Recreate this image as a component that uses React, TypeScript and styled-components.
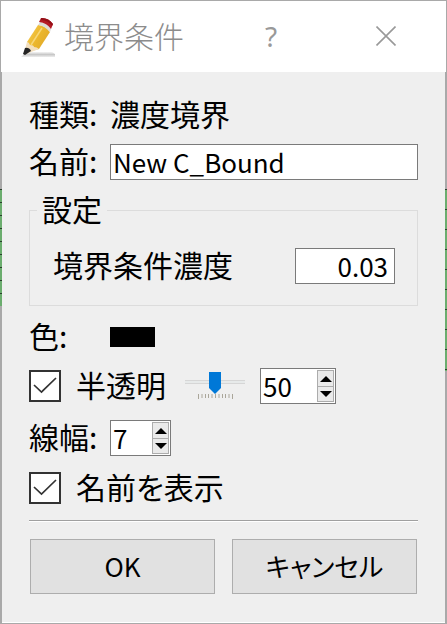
import React, { useState } from "react";
import styled, { createGlobalStyle } from "styled-components";

const GlobalStyle = createGlobalStyle`
  * { box-sizing: border-box; }
  body { margin: 0; background: #efefef; }
  body, input, button {
    font-family: "Noto Sans CJK JP", "Noto Sans", sans-serif;
    color: #000;
  }
`;

const Dialog = styled.main`
  border-top: 1px solid #a9a9a9;
  border-bottom: 1px solid #a9a9a9;
`;

const TitleBar = styled.header`
  display: flex;
  align-items: center;
  height: 71px;
  padding: 0 48px 0 20px;
  background: #fff;
  border: solid #a9a9a9;
  border-width: 0 1px;
`;

const Title = styled.h1`
  flex: 1;
  margin: 0 0 0 7px;
  padding-bottom: 4px;
  font-size: 30px;
  font-weight: 300;
  line-height: 36px;
  white-space: nowrap;
  color: #8c8c8c;
`;

const TitleButton = styled.button`
  display: flex;
  align-items: center;
  justify-content: center;
  width: 24px;
  height: 36px;
  padding: 0 0 2px;
  border: 0;
  background: none;
  font-family: "Noto Sans", sans-serif;
  font-size: 28px;
  line-height: 36px;
  color: #999;
  & + & { margin-left: 91px; }
`;

const Frame = styled.div`
  display: grid;
  grid-template-columns: 2px minmax(0, 1fr) 2px;
`;

const Edge = styled.div<{ $pitch: number; $length: number }>`
  background:
    repeating-linear-gradient(#29402b 0 1px, #6bad6e 1px ${(p) => p.$pitch}px)
      0 117px / 2px ${(p) => p.$length}px no-repeat,
    #a9a9a9;
`;

const Form = styled.form`
  padding: 25px 27px 28px;
  background: #efefef;
  border-bottom: 1px solid #fff;
`;

const Row = styled.div<{ $gap?: number }>`
  display: flex;
  align-items: center;
  height: 36px;
  margin-top: ${(p) => p.$gap ?? 0}px;
  font-size: 30px;
  line-height: 36px;
  white-space: nowrap;
`;

const Label = styled.label`
  flex: none;
  width: 81px;
  padding-bottom: 4px;
`;

const Caption = styled.span`
  flex: none;
  width: 81px;
  padding-bottom: 4px;
`;

const Value = styled.span`
  padding-bottom: 4px;
`;

const TextBox = styled.input<{ $numeric?: boolean }>`
  flex: ${(p) => (p.$numeric ? "0 0 100px" : "1")};
  min-width: 0;
  height: 36px;
  padding: 0 ${(p) => (p.$numeric ? 6 : 2)}px 2px;
  border: 1px solid #7a7a7a;
  border-radius: 0;
  outline: 0;
  background: #fff;
  font-size: 26px;
  text-align: ${(p) => (p.$numeric ? "right" : "left")};
`;

const Group = styled.fieldset`
  margin: 16px 0 0;
  padding: 24px 22px 21px 23px;
  border: 1px solid #dcdcdc;
`;

const Legend = styled.legend`
  margin-left: -16px;
  padding: 0 5px 4px;
  font-size: 30px;
  line-height: 24px;
`;

const GroupLabel = styled.label`
  flex: 1;
  padding-bottom: 4px;
`;

const Swatch = styled.button`
  width: 45px;
  height: 20px;
  padding: 0;
  border: 0;
  background: #000;
`;

const CheckLabel = styled.label`
  display: flex;
  align-items: center;
  gap: 15px;
`;

const CheckText = styled.span`
  padding-bottom: 4px;
  font-feature-settings: "palt";
`;

const CheckBox = styled.input`
  appearance: none;
  width: 32px;
  height: 32px;
  margin: 0;
  border: 2px solid #333;
  background: #fff;
`;

const CheckHolder = styled.span`
  display: grid;
  & > * { grid-area: 1 / 1; }
  svg { pointer-events: none; }
  input:not(:checked) + svg { visibility: hidden; }
`;

const SliderBox = styled.div`
  display: flex;
  flex-direction: column;
  width: 60px;
  height: 28px;
  margin: 0 15px 0 auto;
`;

const Slider = styled.input`
  appearance: none;
  width: 100%;
  height: 22px;
  margin: 0;
  background: linear-gradient(#d6d6d6 0 1px, #e7eaea 1px 3px, #d6d6d6 3px) 0 8px / 100% 4px no-repeat;
  &::-webkit-slider-thumb {
    appearance: none;
    width: 12px;
    height: 22px;
    background: #0078d7;
    clip-path: polygon(0 0, 100% 0, 100% 73%, 50% 100%, 0 73%);
  }
`;

const Ticks = styled.svg`
  display: block;
  align-self: center;
`;

const CheckWithSlider = styled.div`
  display: flex;
  align-items: center;
  width: 231px;
`;

const SpinBox = styled.div<{ $wide?: boolean }>`
  display: flex;
  width: ${(p) => (p.$wide ? 76 : 61)}px;
  height: 36px;
  padding: 1px;
  border: 1px solid #7a7a7a;
  background: #fff;
`;

const SpinInput = styled.input`
  appearance: textfield;
  flex: 1;
  min-width: 0;
  padding: 0 0 2px 1px;
  border: 0;
  outline: 0;
  background: transparent;
  font-size: 26px;
  &::-webkit-inner-spin-button { appearance: none; }
`;

const SpinButtons = styled.div`
  display: grid;
  grid-template-rows: 1fr 1fr;
  width: 17px;
  border: 1px solid #acacac;
`;

const SpinButton = styled.button`
  display: flex;
  align-items: center;
  justify-content: center;
  padding: 0;
  border: 0;
  background: #eaeaea;
  & + & { border-top: 1px solid #acacac; }
`;

const Divider = styled.hr`
  height: 2px;
  margin: 14px 0 17px;
  border: 0;
  border-top: 1px solid #a0a0a0;
  background: #fff;
`;

const Actions = styled.div`
  display: grid;
  grid-template-columns: 1fr 1fr;
  gap: 17px;
  padding: 0 1px;
`;

const ActionButton = styled.button`
  height: 55px;
  padding: 0 0 2px;
  border: 1px solid #adadad;
  background: #e1e1e1;
  font-size: 26px;
  font-feature-settings: "palt";
`;

function PencilIcon() {
  return (
    <svg width="36" height="42" viewBox="0 0 36 42" aria-hidden="true">
      <defs>
        <linearGradient id="shadow" x1="0" y1="0" x2="0" y2="1">
          <stop offset="0" stopColor="#f4f4f4" />
          <stop offset="0.5" stopColor="#c8c8c8" />
          <stop offset="1" stopColor="#ededed" />
        </linearGradient>
        <linearGradient id="wood" x1="0" y1="0" x2="1" y2="0.6">
          <stop offset="0" stopColor="#f6cf62" />
          <stop offset="0.5" stopColor="#edb92d" />
          <stop offset="1" stopColor="#e0a829" />
        </linearGradient>
      </defs>
      <path d="M0 41 6 36H31L34 38V41Z" fill="url(#shadow)" />
      <path d="M6 26 17 9Q24 9 29 16L18 33 10 35Z" fill="url(#wood)" />
      <path d="M6 26Q8 26 9 29Q13 29 13 31Q16 31 18 33L5 38 3 37Z" fill="#f3dfbd" />
      <path d="M4 32Q8 31 10 35L4 39 2 38Z" fill="#252525" />
      <path d="M17 9 19 6Q26 7 30 13L29 16Q24 10 17 9Z" fill="#dddcd8" />
      <path d="M18 6 20 2Q28 2 32 8L30 13Q26 7 18 6Z" fill="#b51a25" />
      <path d="M20 2Q27 1 32 8L31 10Q27 4 20 4Z" fill="#951018" />
      <path d="M21 12 10 29" stroke="#f7d779" strokeWidth="1.5" />
    </svg>
  );
}

function Check({ id, children }: { id: string; children: React.ReactNode }) {
  return (
    <CheckLabel htmlFor={id}>
      <CheckHolder>
        <CheckBox id={id} type="checkbox" defaultChecked />
        <svg width="32" height="32" viewBox="0 0 32 32" aria-hidden="true">
          <path d="M5 15 12.5 22 27 8" fill="none" stroke="#333" strokeWidth="1.7" />
        </svg>
      </CheckHolder>
      <CheckText>{children}</CheckText>
    </CheckLabel>
  );
}

interface SpinnerProps {
  id?: string;
  label?: string;
  value: number;
  wide?: boolean;
  onChange: (value: number) => void;
}

function Spinner({ id, label, value, wide, onChange }: SpinnerProps) {
  return (
    <SpinBox $wide={wide}>
      <SpinInput
        id={id}
        type="number"
        aria-label={label}
        value={value}
        onChange={(e) => onChange(Number(e.target.value))}
      />
      <SpinButtons>
        <SpinButton type="button" aria-label="増やす" onClick={() => onChange(value + 1)}>
          <svg width="12" height="6" viewBox="0 0 12 6"><path d="M0 6 6 0 12 6Z" /></svg>
        </SpinButton>
        <SpinButton type="button" aria-label="減らす" onClick={() => onChange(value - 1)}>
          <svg width="12" height="6" viewBox="0 0 12 6"><path d="M0 0 6 6 12 0Z" /></svg>
        </SpinButton>
      </SpinButtons>
    </SpinBox>
  );
}

export default function App() {
  const [opacity, setOpacity] = useState(50);
  const [lineWidth, setLineWidth] = useState(7);

  return (
    <>
      <GlobalStyle />
      <Dialog>
        <TitleBar>
          <PencilIcon />
          <Title>境界条件</Title>
          <TitleButton type="button" aria-label="ヘルプ">?</TitleButton>
          <TitleButton type="button" aria-label="閉じる">
            <svg width="20" height="20" viewBox="0 0 20 20">
              <path d="M0.5 0.5 19.5 19.5M19.5 0.5 0.5 19.5" stroke="#999" strokeWidth="1.6" />
            </svg>
          </TitleButton>
        </TitleBar>
        <Frame>
          <Edge $pitch={13} $length={117} />
          <Form onSubmit={(e) => e.preventDefault()}>
            <Row>
              <Caption>種類:</Caption>
              <Value>濃度境界</Value>
            </Row>
            <Row $gap={11}>
              <Label htmlFor="name">名前:</Label>
              <TextBox id="name" defaultValue="New C_Bound" />
            </Row>
            <Group>
              <Legend>設定</Legend>
              <Row>
                <GroupLabel htmlFor="density">境界条件濃度</GroupLabel>
                <TextBox id="density" $numeric defaultValue="0.03" />
              </Row>
            </Group>
            <Row $gap={13}>
              <Label htmlFor="color">色:</Label>
              <Swatch id="color" type="button" />
            </Row>
            <Row $gap={13}>
              <CheckWithSlider>
                <Check id="translucent">半透明</Check>
                <SliderBox>
                  <Slider
                    type="range"
                    aria-label="半透明"
                    value={opacity}
                    onChange={(e) => setOpacity(Number(e.target.value))}
                  />
                  <Ticks width="35" height="5" viewBox="0 0 35 5" aria-hidden="true">
                    <path
                      d="M.5 0V5M4 0V4M7.5 0V4M10.5 0V4M14 0V4M17.5 0V4M21 0V4M24.5 0V4M27.5 0V4M31 0V4M34.5 0V5"
                      stroke="#aaa69a"
                    />
                  </Ticks>
                </SliderBox>
              </CheckWithSlider>
              <Spinner label="半透明の値" value={opacity} wide onChange={setOpacity} />
            </Row>
            <Row $gap={16}>
              <Label htmlFor="line-width">線幅:</Label>
              <Spinner id="line-width" value={lineWidth} onChange={setLineWidth} />
            </Row>
            <Row $gap={14}>
              <Check id="show-name">名前を表示</Check>
            </Row>
            <Divider />
            <Actions>
              <ActionButton type="submit">OK</ActionButton>
              <ActionButton type="button">キャンセル</ActionButton>
            </Actions>
          </Form>
          <Edge $pitch={20} $length={182} />
        </Frame>
      </Dialog>
    </>
  );
}
